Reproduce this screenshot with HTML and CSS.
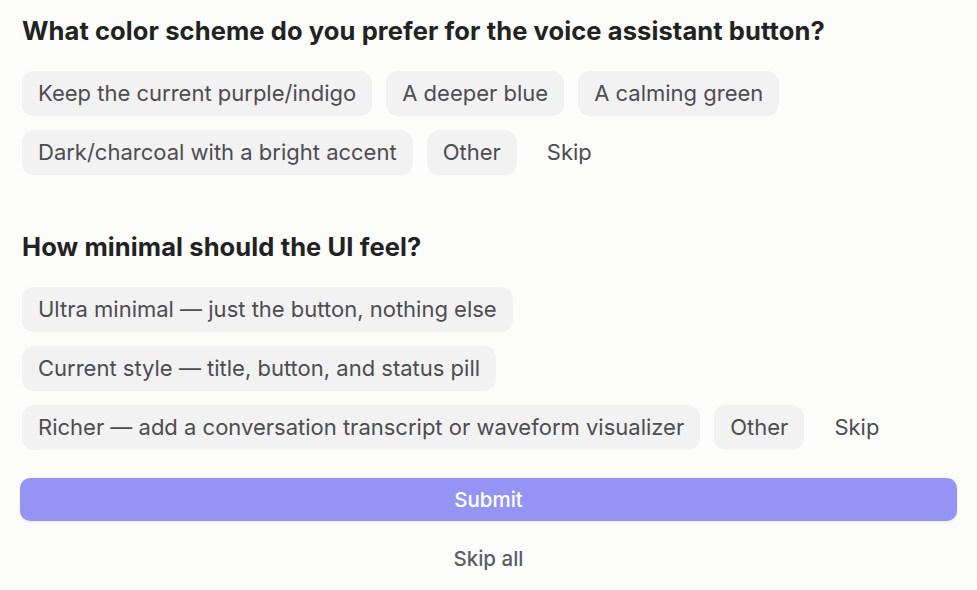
FILE: index.html
```html
<!DOCTYPE html>
<html lang="en">
<head>
<meta charset="utf-8">
<title>Questions</title>
<link rel="stylesheet" href="styles.css">
</head>
<body>
<main class="form">
  <section class="question q-first">
    <h2 class="q-title">What color scheme do you prefer for the voice assistant button?</h2>
    <div class="options">
      <button class="chip">Keep the current purple/indigo</button>
      <button class="chip">A deeper blue</button>
      <button class="chip">A calming green</button>
      <button class="chip">Dark/charcoal with a bright accent</button>
      <button class="chip">Other</button>
      <button class="chip chip-skip">Skip</button>
    </div>
  </section>
  <section class="question q-second">
    <h2 class="q-title">How minimal should the UI feel?</h2>
    <div class="options">
      <button class="chip">Ultra minimal — just the button, nothing else</button>
      <button class="chip">Current style — title, button, and status pill</button>
      <button class="chip">Richer — add a conversation transcript or waveform visualizer</button>
      <button class="chip">Other</button>
      <button class="chip chip-skip">Skip</button>
    </div>
  </section>
  <button class="submit">Submit</button>
  <button class="skip-all">Skip all</button>
</main>
</body>
</html>
```

FILE: styles.css
```css
html, body {
  margin: 0;
  padding: 0;
  background: #fcfcfb;
}
body {
  font-family: Inter, "Noto Sans", "Liberation Sans", sans-serif;
  color: #222;
}
.form {
  padding: 16px 20px 0 20px;
  display: flex;
  flex-direction: column;
}
.question {
  padding: 0 2px;
}
.q-second {
  margin-top: 57px;
}
.q-title {
  margin: 0;
  font-size: 25.5px;
  line-height: 30px;
  font-weight: 700;
  color: #222;
  letter-spacing: 0.1px;
}
.options {
  margin-top: 25px;
  display: flex;
  flex-wrap: wrap;
  gap: 14px;
}
.chip {
  font-family: inherit;
  font-size: 22px;
  line-height: 25px;
  padding: 10px 16px;
  border: none;
  border-radius: 12px;
  background: #f2f2f3;
  color: #4d4d50;
  cursor: pointer;
}
.chip-skip {
  background: transparent;
}
.submit {
  margin-top: 28px;
  height: 43px;
  border: none;
  border-radius: 10px;
  background: #9494f4;
  color: #fff;
  font-family: inherit;
  font-size: 20.5px;
  font-weight: 500;
  box-shadow: 0 1px 3px rgba(0,0,0,0.08);
}
.skip-all {
  margin-top: 26px;
  align-self: center;
  border: none;
  background: transparent;
  color: #5c5c64;
  font-family: inherit;
  font-size: 20.5px;
  font-weight: 500;
  line-height: 24px;
  padding: 0;
}
```
